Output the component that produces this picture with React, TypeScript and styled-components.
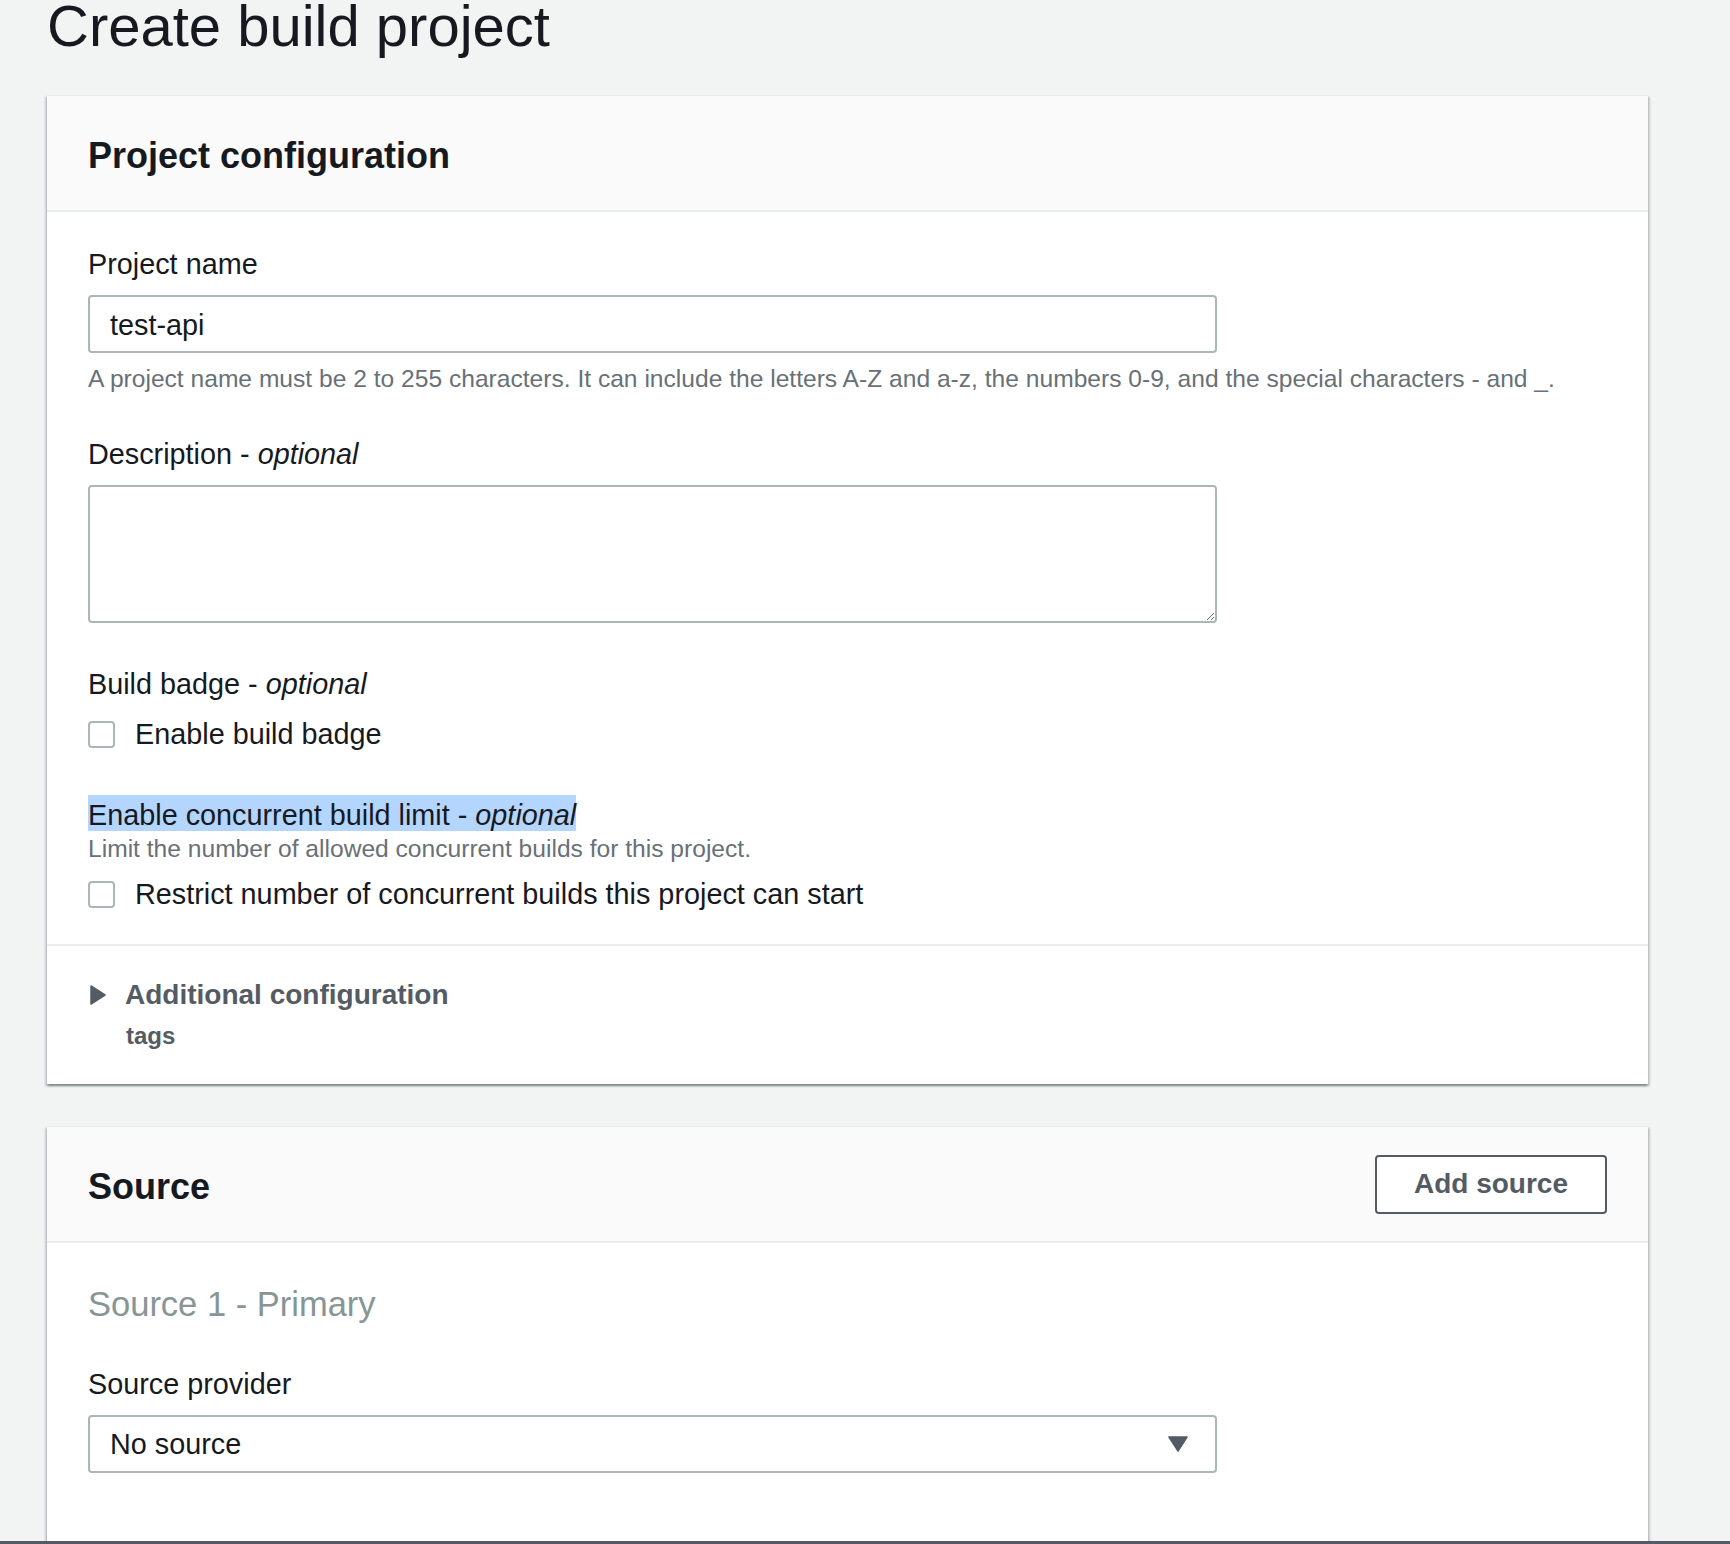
import styled, { createGlobalStyle } from "styled-components";

const GlobalStyle = createGlobalStyle`
  html, body {
    margin: 0;
    padding: 0;
    background: #f2f3f3;
  }
  body {
    font-family: "Liberation Sans", Arial, sans-serif;
    color: #16191f;
  }
  * {
    box-sizing: border-box;
  }
`;

const Page = styled.div`
  width: 1730px;
  height: 1544px;
  display: flex;
  flex-direction: column;
  overflow: hidden;
`;

const Content = styled.div`
  flex: 1;
  display: flex;
  flex-direction: column;
  padding: 0 82px 0 47px;
  min-height: 0;
`;

const PageTitle = styled.h1`
  margin: 0 0 43px;
  font-size: 58px;
  line-height: 52px;
  font-weight: 400;
  color: #16191f;
`;

const Card = styled.section<{ $grow?: boolean }>`
  background: #ffffff;
  display: flex;
  flex-direction: column;
  box-shadow: 0 2px 2px 0 rgba(0, 28, 36, 0.3), 2px 2px 2px 0 rgba(0, 28, 36, 0.15),
    -2px 2px 2px 0 rgba(0, 28, 36, 0.15);
  border-top: 1px solid #eaeded;
  ${(p) => (p.$grow ? "flex: 1; margin-top: 42px;" : "")}
`;

const CardHeader = styled.div`
  height: 116px;
  padding: 6px 41px 0;
  background: #fafafa;
  border-bottom: 2px solid #eaeded;
  display: flex;
  align-items: center;
  justify-content: space-between;
`;

const CardTitle = styled.h2`
  margin: 0;
  font-size: 36px;
  line-height: 44px;
  font-weight: 700;
  color: #16191f;
`;

const OutlineButton = styled.button`
  width: 232px;
  height: 59px;
  margin-top: -6px;
  border: 2px solid #545b64;
  border-radius: 4px;
  background: #ffffff;
  color: #545b64;
  font-family: inherit;
  font-size: 28px;
  font-weight: 700;
  cursor: pointer;
`;

const CardBody = styled.div<{ $gap?: number }>`
  padding: 32px 41px 30px;
  display: flex;
  flex-direction: column;
  gap: ${(p) => p.$gap ?? 41}px;
`;

const Field = styled.div`
  display: flex;
  flex-direction: column;
  align-items: flex-start;
`;

const Label = styled.div`
  font-size: 28.8px;
  line-height: 40px;
  color: #16191f;
  em {
    font-style: italic;
  }
`;

const Highlight = styled.span`
  background: #b4d5fe;
  padding-top: 4px;
`;

const TextInput = styled.input`
  margin-top: 11px;
  width: 1129px;
  height: 58px;
  padding: 2px 20px 0;
  border: 2px solid #aab7b8;
  border-radius: 4px;
  font-family: inherit;
  font-size: 28.8px;
  color: #16191f;
  background: #ffffff;
  outline: none;
`;

const TextArea = styled.textarea`
  margin-top: 11px;
  width: 1129px;
  height: 138px;
  padding: 10px 20px;
  border: 2px solid #aab7b8;
  border-radius: 4px;
  font-family: inherit;
  font-size: 28.8px;
  color: #16191f;
  background: #ffffff;
  resize: vertical;
  outline: none;
  display: block;
`;

const Help = styled.div<{ $gap?: number }>`
  margin-top: ${(p) => p.$gap ?? 0}px;
  font-size: 24.6px;
  line-height: 28px;
  color: #687078;
`;

const CheckRow = styled.label<{ $gap: number }>`
  margin-top: ${(p) => p.$gap}px;
  display: flex;
  align-items: center;
  gap: 20px;
  font-size: 28.8px;
  line-height: 40px;
  color: #16191f;
`;

const CheckBox = styled.span`
  width: 27px;
  height: 27px;
  border: 2px solid #aab7b8;
  border-radius: 4px;
  background: #ffffff;
  flex-shrink: 0;
`;

const Divider = styled.div`
  height: 2px;
  background: #eaeded;
`;

const Expandable = styled.div`
  padding: 29px 41px 34px;
  display: flex;
  flex-direction: column;
`;

const ExpandHead = styled.div`
  display: flex;
  align-items: center;
  gap: 19px;
  padding-left: 2px;
  font-size: 28px;
  line-height: 40px;
  font-weight: 700;
  color: #545b64;
`;

const ExpandSub = styled.div`
  margin-top: 7px;
  padding-left: 38px;
  font-size: 24px;
  line-height: 28px;
  font-weight: 700;
  color: #545b64;
`;

const SubHeading = styled.div`
  margin-top: 5px;
  font-size: 34.5px;
  line-height: 48px;
  color: #879596;
`;

const SelectBox = styled.div`
  margin-top: 11px;
  width: 1129px;
  height: 58px;
  padding: 0 27px 0 20px;
  border: 2px solid #aab7b8;
  border-radius: 4px;
  display: flex;
  align-items: center;
  justify-content: space-between;
  font-size: 28.8px;
  color: #16191f;
  background: #ffffff;
`;

const BottomBar = styled.div`
  height: 3px;
  background: #545b64;
  flex-shrink: 0;
`;

function CaretRight() {
  return (
    <svg width="16" height="20" viewBox="0 0 16 20">
      <path d="M1 1 L15 10 L1 19 Z" fill="#545b64" stroke="#545b64" strokeWidth="1.5" strokeLinejoin="round" />
    </svg>
  );
}

function CaretDown() {
  return (
    <svg width="20" height="16" viewBox="0 0 20 16">
      <path d="M1 1 H19 L10 15 Z" fill="#545b64" stroke="#545b64" strokeWidth="1.5" strokeLinejoin="round" />
    </svg>
  );
}

export default function App() {
  return (
    <>
      <GlobalStyle />
      <Page>
        <Content>
          <PageTitle>Create build project</PageTitle>

          <Card>
            <CardHeader>
              <CardTitle>Project configuration</CardTitle>
            </CardHeader>
            <CardBody>
              <Field>
                <Label>Project name</Label>
                <TextInput defaultValue="test-api" />
                <Help $gap={12}>
                  A project name must be 2 to 255 characters. It can include the letters A-Z and a-z, the numbers
                  0-9, and the special characters - and _.
                </Help>
              </Field>
              <Field>
                <Label>
                  Description - <em>optional</em>
                </Label>
                <TextArea />
              </Field>
              <Field>
                <Label>
                  Build badge - <em>optional</em>
                </Label>
                <CheckRow $gap={10}>
                  <CheckBox />
                  Enable build badge
                </CheckRow>
              </Field>
              <Field>
                <Label>
                  <Highlight>
                    Enable concurrent build limit - <em>optional</em>
                  </Highlight>
                </Label>
                <Help>Limit the number of allowed concurrent builds for this project.</Help>
                <CheckRow $gap={11}>
                  <CheckBox />
                  Restrict number of concurrent builds this project can start
                </CheckRow>
              </Field>
            </CardBody>
            <Divider />
            <Expandable>
              <ExpandHead>
                <CaretRight />
                Additional configuration
              </ExpandHead>
              <ExpandSub>tags</ExpandSub>
            </Expandable>
          </Card>

          <Card $grow>
            <CardHeader>
              <CardTitle>Source</CardTitle>
              <OutlineButton>Add source</OutlineButton>
            </CardHeader>
            <CardBody $gap={36}>
              <SubHeading>Source 1 - Primary</SubHeading>
              <Field>
                <Label>Source provider</Label>
                <SelectBox>
                  No source
                  <CaretDown />
                </SelectBox>
              </Field>
            </CardBody>
          </Card>
        </Content>
        <BottomBar />
      </Page>
    </>
  );
}
